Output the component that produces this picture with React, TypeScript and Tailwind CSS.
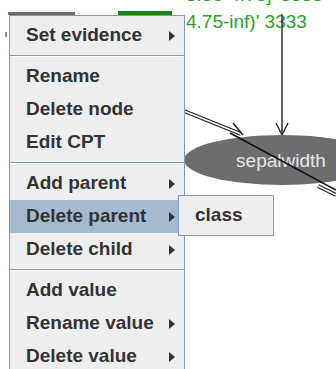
import { ReactNode } from "react";

const font = { fontFamily: '"Liberation Sans", Arial, sans-serif' };

const Arrow = () => (
  <svg width="6" height="10" viewBox="0 0 6 10" className="shrink-0">
    <path d="M0 0 L6 5 L0 10 Z" fill="#333333" />
  </svg>
);

const Item = ({
  label,
  sub,
  active,
}: {
  label: string;
  sub?: boolean;
  active?: boolean;
}) => (
  <div
    className={`flex h-[33px] items-center justify-between pl-4 pr-[9px] text-[19px] font-bold text-[#333333] ${
      active ? "bg-[#a5b9cf]" : ""
    }`}
  >
    <span>{label}</span>
    {sub && <Arrow />}
  </div>
);

const Separator = () => (
  <div className="my-[3px]">
    <div className="h-px bg-[#8197c9]" />
    <div className="h-px bg-white" />
  </div>
);

const Diagram = () => (
  <svg
    width="336"
    height="369"
    viewBox="0 0 336 369"
    className="absolute left-0 top-0"
    style={font}
  >
    <rect x="8" y="12" width="67" height="3" fill="#6e6e6e" />
    <rect x="5" y="32" width="2" height="5" fill="#8a8a8a" />
    <rect x="118" y="11" width="54" height="4" fill="#168816" />
    <text x="186" y="1" fontSize="19" fill="#2e9e2e">
      3.35-4.75]' 3333
    </text>
    <text x="186" y="28" fontSize="19" fill="#2e9e2e">
      4.75-inf)' 3333
    </text>
    <line x1="282" y1="14" x2="282" y2="135" stroke="#333" strokeWidth="1.5" />
    <path d="M276 123 L282 135 L288 123" stroke="#333" strokeWidth="1.5" fill="none" />
    <line x1="184" y1="111" x2="241" y2="134" stroke="#222" strokeWidth="4" />
    <line x1="184" y1="111" x2="241" y2="134" stroke="#fff" strokeWidth="1.6" />
    <path d="M233 123 L243 135" stroke="#222" strokeWidth="1.5" fill="none" />
    <ellipse cx="282" cy="160" rx="98" ry="25" fill="#6d6d6c" />
    <text x="281" y="167" fontSize="19" fill="#e6e6e6" textAnchor="middle">
      sepalwidth
    </text>
    <line x1="230" y1="133" x2="336" y2="190" stroke="#111" strokeWidth="1.5" />
    <line x1="318" y1="186" x2="336" y2="195" stroke="#222" strokeWidth="4" />
    <line x1="318" y1="186" x2="336" y2="195" stroke="#fff" strokeWidth="1.6" />
  </svg>
);

const Menu = ({ children }: { children: ReactNode }) => (
  <div className="absolute left-[9px] top-[15px] w-[176px] border border-[#8197c9] bg-[#eeeeee] pt-[3px] pb-[3px]">
    {children}
  </div>
);

export default function App() {
  return (
    <div className="relative h-[369px] w-[336px] overflow-hidden bg-white" style={font}>
      <Diagram />
      <Menu>
        <Item label="Set evidence" sub />
        <Separator />
        <Item label="Rename" />
        <Item label="Delete node" />
        <Item label="Edit CPT" />
        <Separator />
        <Item label="Add parent" sub />
        <Item label="Delete parent" sub active />
        <Item label="Delete child" sub />
        <Separator />
        <Item label="Add value" />
        <Item label="Rename value" sub />
        <Item label="Delete value" sub />
      </Menu>
      <div className="absolute left-[178px] top-[195px] w-[96px] border border-[#8197c9] bg-[#eeeeee] py-[3px]">
        <div className="flex h-[33px] items-center pl-4 text-[19px] font-bold text-[#333333]">
          class
        </div>
      </div>
    </div>
  );
}
